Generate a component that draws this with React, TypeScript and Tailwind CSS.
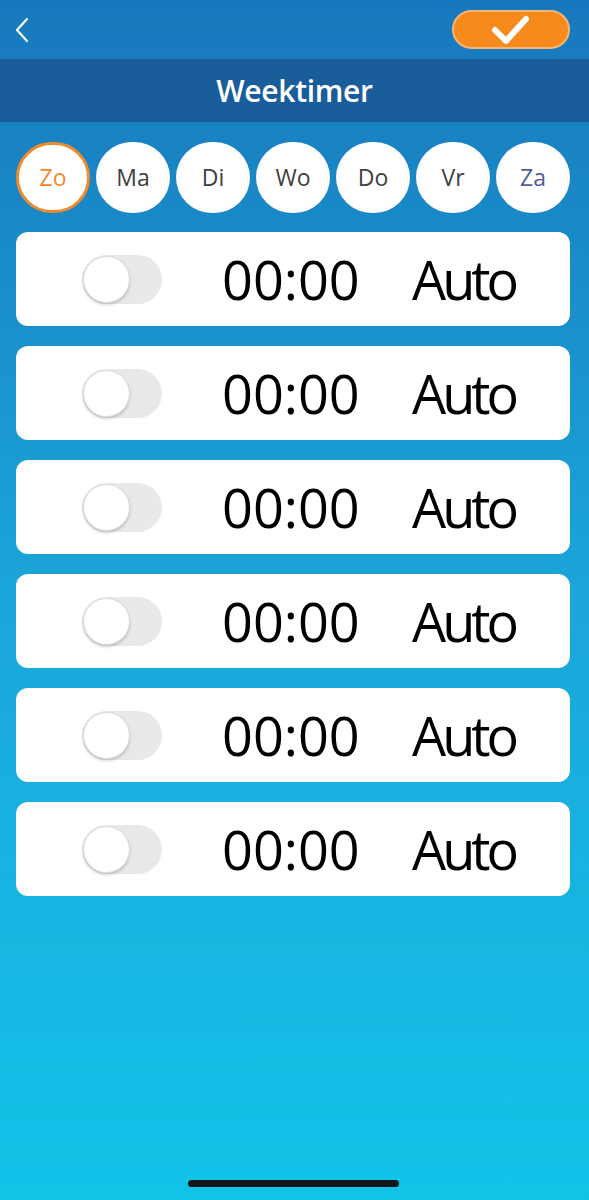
import React from "react";

const days = [
  { l: "Zo", c: "text-[#ef8b2c]", active: true },
  { l: "Ma", c: "text-[#404040]" },
  { l: "Di", c: "text-[#404040]" },
  { l: "Wo", c: "text-[#404040]" },
  { l: "Do", c: "text-[#404040]" },
  { l: "Vr", c: "text-[#404040]" },
  { l: "Za", c: "text-[#4f5b9c]" },
];

function Toggle() {
  return (
    <div className="relative w-[80px] h-[49px] rounded-full bg-[#e9e9eb]">
      <div className="absolute left-[1px] top-[1px] w-[47px] h-[47px] rounded-full bg-white border border-[#dcdcdc] shadow-[0_2px_3px_rgba(0,0,0,0.18)]" />
    </div>
  );
}

function Row() {
  return (
    <div className="h-[94px] rounded-[12px] bg-white flex items-center pl-[66px]">
      <Toggle />
      <div
        className="ml-[60px] w-[190px] text-[54px] leading-none text-black"
        style={{ fontFamily: '"Open Sans", sans-serif' }}
      >
        00:00
      </div>
      <div
        className="text-[54px] leading-none text-black tracking-[-4px]"
        style={{ fontFamily: '"Open Sans", sans-serif' }}
      >
        Auto
      </div>
    </div>
  );
}

export default function App() {
  return (
    <div
      className="w-[589px] h-[1200px] bg-gradient-to-b from-[#1978bd] via-[#1ba6d9] to-[#12c3e8] flex flex-col relative overflow-hidden"
      style={{ fontFamily: '"Open Sans", sans-serif' }}
    >
      <div className="h-[59px] flex items-center justify-between pl-[12px] pr-[19px]">
        <svg width="20" height="28" viewBox="0 0 20 28" fill="none">
          <path d="M15 3 L5 14 L15 25" stroke="white" strokeWidth="2.2" strokeLinecap="round" strokeLinejoin="round" />
        </svg>
        <div className="w-[118px] h-[39px] rounded-full bg-[#f68a1d] border-2 border-[#f7b673] flex items-center justify-center">
          <svg width="42" height="32" viewBox="0 0 42 32" fill="none">
            <path d="M5 16 L16 27 L36 5" stroke="white" strokeWidth="6" strokeLinecap="round" strokeLinejoin="round" />
          </svg>
        </div>
      </div>
      <div className="h-[63px] bg-[#1a5d9b] flex items-center justify-center">
        <span className="text-white text-[30px] font-semibold tracking-[-0.3px]">Weektimer</span>
      </div>
      <div className="pl-[16px] pr-[19px] pt-[20px] flex gap-[6px]">
        {days.map((d) => (
          <div
            key={d.l}
            className={`w-[74px] h-[71px] rounded-full bg-white flex items-center justify-center text-[23px] ${d.c} ${
              d.active ? "border-[3px] border-[#ef8b2c]" : ""
            }`}
          >
            {d.l}
          </div>
        ))}
      </div>
      <div className="pl-[16px] pr-[19px] pt-[19px] flex flex-col gap-[20px]">
        {[0, 1, 2, 3, 4, 5].map((i) => (
          <Row key={i} />
        ))}
      </div>
      <div className="absolute left-[188px] top-[1180px] w-[211px] h-[7px] rounded-full bg-[#111418]" />
    </div>
  );
}
